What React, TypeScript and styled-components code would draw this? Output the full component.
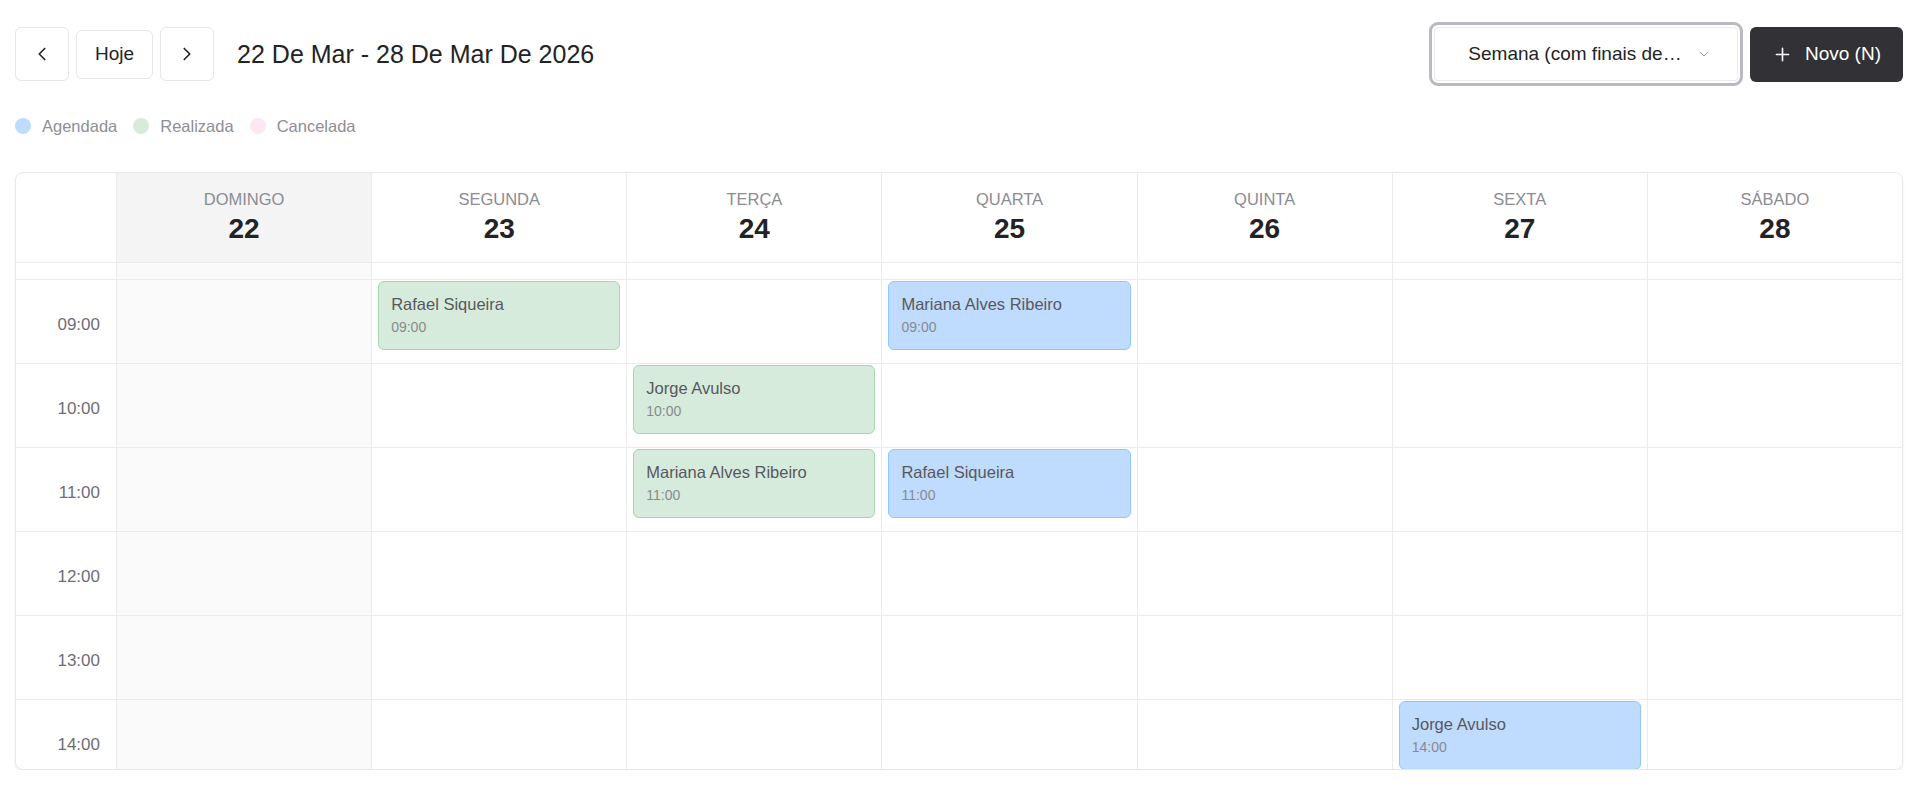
import React from "react";
import styled, { createGlobalStyle } from "styled-components";
import { ChevronLeft, ChevronRight, ChevronDown, Plus } from "lucide-react";

type Status = "agendada" | "realizada" | "cancelada";

interface Appointment {
  day: number;
  hour: number;
  name: string;
  status: Status;
}

const DAYS = [
  { name: "Domingo", date: 22 },
  { name: "Segunda", date: 23 },
  { name: "Terça", date: 24 },
  { name: "Quarta", date: 25 },
  { name: "Quinta", date: 26 },
  { name: "Sexta", date: 27 },
  { name: "Sábado", date: 28 },
];

const HOURS = [9, 10, 11, 12, 13, 14];

const APPOINTMENTS: Appointment[] = [
  { day: 1, hour: 9, name: "Rafael Siqueira", status: "realizada" },
  { day: 3, hour: 9, name: "Mariana Alves Ribeiro", status: "agendada" },
  { day: 2, hour: 10, name: "Jorge Avulso", status: "realizada" },
  { day: 2, hour: 11, name: "Mariana Alves Ribeiro", status: "realizada" },
  { day: 3, hour: 11, name: "Rafael Siqueira", status: "agendada" },
  { day: 5, hour: 14, name: "Jorge Avulso", status: "agendada" },
];

const STATUS_COLORS: Record<Status, { bg: string; border: string }> = {
  agendada: { bg: "#bfdbfe", border: "#93c5fd" },
  realizada: { bg: "#d6ebdc", border: "#a5d6b0" },
  cancelada: { bg: "#fce7f3", border: "#f9c5e0" },
};

const ROW_HEIGHT = 84;

const pad = (n: number) => String(n).padStart(2, "0");

const App: React.FC = () => {
  return (
    <>
      <GlobalStyle />
      <Page>
        <Toolbar>
          <NavGroup>
            <IconButton aria-label="Anterior">
              <ChevronLeft size={22} strokeWidth={1.8} />
            </IconButton>
            <TodayButton>Hoje</TodayButton>
            <IconButton aria-label="Próximo">
              <ChevronRight size={22} strokeWidth={1.8} />
            </IconButton>
            <RangeTitle>22 De Mar - 28 De Mar De 2026</RangeTitle>
          </NavGroup>
          <Actions>
            <ViewSelect>
              <SelectText>Semana (com finais de…</SelectText>
              <ChevronDown size={16} strokeWidth={1.5} color="#9a9aa0" />
            </ViewSelect>
            <NewButton>
              <Plus size={21} strokeWidth={1.8} />
              Novo (N)
            </NewButton>
          </Actions>
        </Toolbar>

        <Legend>
          <LegendItem>
            <Dot $color={STATUS_COLORS.agendada.bg} />
            Agendada
          </LegendItem>
          <LegendItem>
            <Dot $color={STATUS_COLORS.realizada.bg} />
            Realizada
          </LegendItem>
          <LegendItem>
            <Dot $color={STATUS_COLORS.cancelada.bg} />
            Cancelada
          </LegendItem>
        </Legend>

        <Calendar>
          <HeaderRow>
            <Corner />
            {DAYS.map((d, i) => (
              <DayHeader key={d.date} $muted={i === 0}>
                <DayName>{d.name}</DayName>
                <DayNumber>{d.date}</DayNumber>
              </DayHeader>
            ))}
          </HeaderRow>
          <Body>
            {/* final da linha das 08:00, já rolada para fora */}
            <HourRow $height={17}>
              <TimeCell />
              {DAYS.map((d, i) => (
                <Cell key={d.date} $muted={i === 0} />
              ))}
            </HourRow>
            {HOURS.map((h) => (
              <HourRow key={h} $height={ROW_HEIGHT}>
                <TimeCell>{pad(h)}:00</TimeCell>
                {DAYS.map((d, i) => {
                  const appt = APPOINTMENTS.find(
                    (a) => a.day === i && a.hour === h
                  );
                  return (
                    <Cell key={d.date} $muted={i === 0}>
                      {appt && (
                        <Event
                          $bg={STATUS_COLORS[appt.status].bg}
                          $border={STATUS_COLORS[appt.status].border}
                        >
                          <EventName>{appt.name}</EventName>
                          <EventTime>{pad(h)}:00</EventTime>
                        </Event>
                      )}
                    </Cell>
                  );
                })}
              </HourRow>
            ))}
          </Body>
        </Calendar>
      </Page>
    </>
  );
};

export default App;

const GlobalStyle = createGlobalStyle`
  body {
    margin: 0;
    background: #ffffff;
    font-family: "Liberation Sans", Arial, sans-serif;
    color: #232326;
  }
  * {
    box-sizing: border-box;
  }
`;

const Page = styled.div`
  padding: 22px 17px 0 15px;
`;

const Toolbar = styled.div`
  display: flex;
  justify-content: space-between;
  align-items: center;
  height: 64px;
`;

const NavGroup = styled.div`
  display: flex;
  align-items: center;
  gap: 7px;
`;

const IconButton = styled.button`
  width: 54px;
  height: 54px;
  display: flex;
  align-items: center;
  justify-content: center;
  background: #ffffff;
  border: 1px solid #e6e6e8;
  border-radius: 6px;
  color: #232326;
  cursor: pointer;
  padding: 0;
`;

const TodayButton = styled.button`
  height: 49px;
  padding: 0 18px;
  background: #ffffff;
  border: 1px solid #e6e6e8;
  border-radius: 6px;
  font-family: inherit;
  font-size: 19px;
  color: #232326;
  cursor: pointer;
`;

const RangeTitle = styled.h1`
  margin: 0 0 0 16px;
  font-size: 25px;
  font-weight: 400;
  color: #232326;
`;

const Actions = styled.div`
  display: flex;
  align-items: center;
  gap: 7px;
`;

const ViewSelect = styled.button`
  width: 314px;
  height: 64px;
  display: flex;
  align-items: center;
  justify-content: center;
  gap: 14px;
  padding: 0 20px 0 28px;
  background: #ffffff;
  border: 3px solid #b9b9bf;
  border-radius: 9px;
  box-shadow: inset 0 0 0 2px #ffffff, inset 0 0 0 3px #ebebed;
  outline: none;
  font-family: inherit;
  cursor: pointer;
`;

const SelectText = styled.span`
  font-size: 19px;
  color: #232326;
  white-space: nowrap;
`;

const NewButton = styled.button`
  height: 55px;
  display: flex;
  align-items: center;
  gap: 12px;
  padding: 0 22px;
  background: #323136;
  border: none;
  border-radius: 6px;
  color: #ffffff;
  font-family: inherit;
  font-size: 19px;
  cursor: pointer;
`;

const Legend = styled.div`
  display: flex;
  align-items: center;
  gap: 16px;
  margin-top: 30px;
  height: 20px;
`;

const LegendItem = styled.span`
  display: flex;
  align-items: center;
  gap: 11px;
  font-size: 16.5px;
  color: #8e8e96;
`;

const Dot = styled.span<{ $color: string }>`
  width: 16px;
  height: 16px;
  border-radius: 50%;
  background: ${(p) => p.$color};
`;

const Calendar = styled.div`
  margin-top: 36px;
  border: 1px solid #e8e8ea;
  border-radius: 8px;
  box-shadow: 0 2px 3px rgba(0, 0, 0, 0.07);
  overflow: hidden;
`;

const columns = `100px repeat(7, 1fr)`;

const HeaderRow = styled.div`
  display: grid;
  grid-template-columns: ${columns};
  height: 90px;
  border-bottom: 1px solid #ebebed;
`;

const Corner = styled.div``;

const DayHeader = styled.div<{ $muted?: boolean }>`
  display: flex;
  flex-direction: column;
  align-items: center;
  padding-top: 16px;
  gap: 4px;
  border-left: 1px solid #ebebed;
  background: ${(p) => (p.$muted ? "#f4f4f5" : "#ffffff")};
`;

const DayName = styled.span`
  font-size: 16.5px;
  line-height: 20px;
  text-transform: uppercase;
  color: #8b8b93;
`;

const DayNumber = styled.span`
  font-size: 28px;
  line-height: 32px;
  font-weight: 700;
  color: #232326;
`;

const Body = styled.div`
  height: 506px;
  overflow: hidden;
`;

const HourRow = styled.div<{ $height: number }>`
  display: grid;
  grid-template-columns: ${columns};
  height: ${(p) => p.$height}px;
  border-bottom: 1px solid #ebebed;
`;

const TimeCell = styled.div`
  display: flex;
  align-items: center;
  justify-content: flex-end;
  padding: 6px 16px 0 0;
  font-size: 17px;
  color: #6e6e76;
`;

const Cell = styled.div<{ $muted?: boolean }>`
  border-left: 1px solid #ebebed;
  padding: 1px 6px 0 6px;
  background: ${(p) => (p.$muted ? "#fafafa" : "#ffffff")};
`;

const Event = styled.div<{ $bg: string; $border: string }>`
  height: 69px;
  padding: 12px 12px 0 12px;
  background: ${(p) => p.$bg};
  border: 1.5px solid ${(p) => p.$border};
  border-radius: 6px;
`;

const EventName = styled.div`
  font-size: 16.5px;
  line-height: 20px;
  color: #58585c;
  white-space: nowrap;
  overflow: hidden;
  text-overflow: ellipsis;
`;

const EventTime = styled.div`
  margin-top: 4px;
  font-size: 14px;
  line-height: 18px;
  color: #8a8a8e;
`;
